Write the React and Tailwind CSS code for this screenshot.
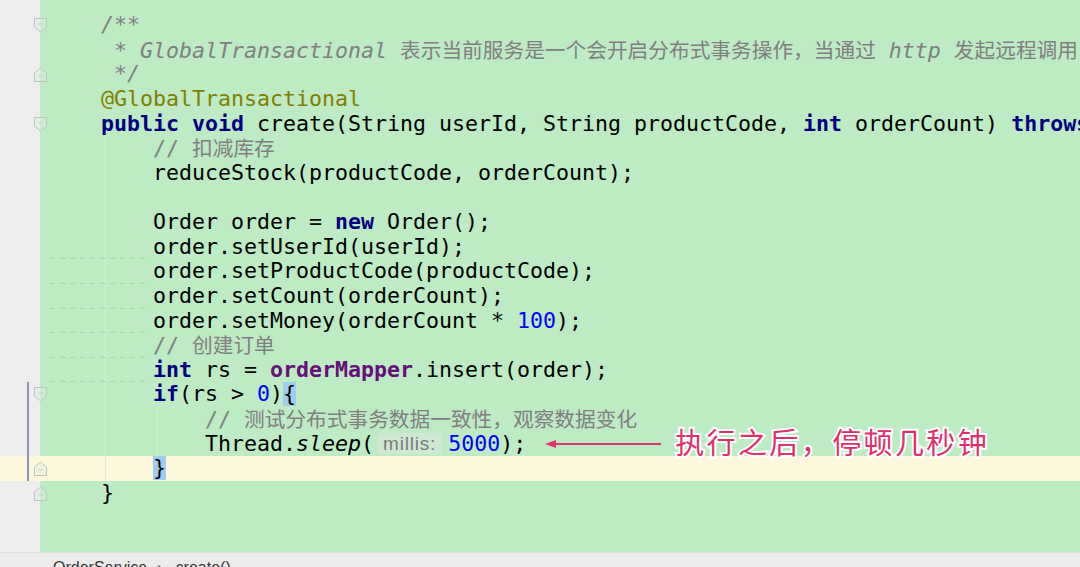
const mono = "font-['DejaVu_Sans_Mono','Liberation_Mono',monospace]";

const Kw = ({ children }) => <span className="text-[#000080] font-bold">{children}</span>;
const Cmt = ({ children }) => <span className="text-[#808080]">{children}</span>;
const Doc = ({ children }) => <span className="text-[#808080] italic">{children}</span>;
const Num = ({ children }) => <span className="text-[#0000ff]">{children}</span>;
const Cjk = ({ children }) => (
    <span className="font-['Noto_Sans_CJK_SC',sans-serif] text-[20.7px] not-italic">{children}</span>
);
const Brace = ({ children }) => <span className="bg-[#9fcdf0]">{children}</span>;

function Fold({ dir }) {
    const pts = dir === "down" ? "0.5,0.5 12.5,0.5 12.5,9 6.5,14 0.5,9" : "0.5,14.5 12.5,14.5 12.5,6 6.5,1 0.5,6";
    return (
        <svg className="absolute right-[-7px] top-[5px] z-10" width="13" height="15" viewBox="0 0 13 15">
            <polygon points={pts} fill="#e2eee3" fillOpacity="0.4" stroke="#b8cbbb" strokeWidth="1" />
            <line x1="4" y1={dir === "down" ? 6 : 9} x2="9" y2={dir === "down" ? 6 : 9} stroke="#c6d6c8" strokeWidth="1" />
        </svg>
    );
}

function Wavy() {
    return (
        <svg className="absolute left-[10px] bottom-[-2px]" width="100" height="4" viewBox="0 0 100 4">
            <path
                d="M0 2 Q2.5 0 5 2 T10 2 T15 2 T20 2 T25 2 T30 2 T35 2 T40 2 T45 2 T50 2 T55 2 T60 2 T65 2 T70 2 T75 2 T80 2 T85 2 T90 2 T95 2 T100 2"
                fill="none"
                stroke="#a9cfae"
                strokeWidth="1"
            />
        </svg>
    );
}

function Row({ children, fold, yellow, change, wavy, guides = [], top }) {
    return (
        <div className={`flex h-[24.63px] ${yellow ? "bg-[#fdf8dc]" : ""} ${top ? "relative z-20" : ""}`}>
            <div className={`relative w-[40px] shrink-0 ${yellow ? "" : "bg-[#ededed]"}`}>
                {change && <div className="absolute left-[27px] top-0 bottom-0 w-[2px] bg-[#8d96ae]" />}
                {fold && <Fold dir={fold} />}
            </div>
            <div
                className={`relative flex-1 flex items-center pl-[61px] whitespace-pre leading-[24.63px] ${
                    top ? "" : "overflow-hidden"
                } ${yellow ? "" : "bg-[#bdebc4]"}`}
            >
                {guides.includes(1) && <div className="absolute left-[65px] top-0 bottom-0 w-px bg-[#d3f0d7]" />}
                {guides.includes(2) && <div className="absolute left-[117px] top-0 bottom-0 w-px bg-[#d3f0d7]" />}
                {wavy && <Wavy />}
                <span className="relative">{children}</span>
            </div>
        </div>
    );
}

export default function App() {
    const I1 = "    ";
    const I2 = "        ";
    return (
        <div className={`w-[1080px] h-[567px] flex flex-col overflow-hidden bg-[#bdebc4] text-[21.6px] text-black ${mono}`}>
            <div className="flex h-[13px] shrink-0">
                <div className="w-[40px] bg-[#ededed]" />
                <div className="flex-1" />
            </div>

            <Row fold="down">
                <Doc>/**</Doc>
            </Row>
            <Row>
                <Doc>
                    {" * GlobalTransactional "}
                    <Cjk>表示当前服务是一个会开启分布式事务操作，当通过</Cjk>
                    {" http "}
                    <Cjk>发起远程调用</Cjk>
                </Doc>
            </Row>
            <Row fold="up">
                <Doc>{" */"}</Doc>
            </Row>
            <Row>
                <span className="text-[#808000]">@GlobalTransactional</span>
            </Row>
            <Row fold="down">
                <Kw>public</Kw> <Kw>void</Kw> create(String userId, String productCode, <Kw>int</Kw> orderCount){" "}
                <Kw>throws</Kw>
            </Row>
            <Row guides={[1]}>
                {I1}
                <Cmt>
                    {"// "}
                    <Cjk>扣减库存</Cjk>
                </Cmt>
            </Row>
            <Row guides={[1]}>{I1}reduceStock(productCode, orderCount);</Row>
            <Row guides={[1]}>{" "}</Row>
            <Row guides={[1]}>
                {I1}Order order = <Kw>new</Kw> Order();
            </Row>
            <Row guides={[1]} wavy>
                {I1}order.setUserId(userId);
            </Row>
            <Row guides={[1]} wavy>
                {I1}order.setProductCode(productCode);
            </Row>
            <Row guides={[1]} wavy>
                {I1}order.setCount(orderCount);
            </Row>
            <Row guides={[1]} wavy>
                {I1}order.setMoney(orderCount * <Num>100</Num>);
            </Row>
            <Row guides={[1]} wavy>
                {I1}
                <Cmt>
                    {"// "}
                    <Cjk>创建订单</Cjk>
                </Cmt>
            </Row>
            <Row guides={[1]} wavy>
                {I1}
                <Kw>int</Kw> rs = <span className="text-[#660e7a] font-bold">orderMapper</span>.insert(order);
            </Row>
            <Row guides={[1]} fold="down" change>
                {I1}
                <Kw>if</Kw>(rs &gt; <Num>0</Num>)<Brace>{"{"}</Brace>
            </Row>
            <Row guides={[1, 2]} change>
                {I2}
                <Cmt>
                    {"// "}
                    <Cjk>测试分布式事务数据一致性，观察数据变化</Cjk>
                </Cmt>
            </Row>
            <Row guides={[1, 2]} change top>
                <span className="inline-flex items-center ml-[104px]">
                    <span>
                        Thread.<span className="italic">sleep</span>(
                    </span>
                    <span className="inline-flex items-center h-[21px] ml-[3px] mr-[6px] px-[6px] rounded-[4px] bg-[#cfe8d1] text-[#7b7b7b] font-['Liberation_Sans',sans-serif] text-[19px] tracking-[0.8px] leading-none">
                        millis:
                    </span>
                    <span>
                        <Num>5000</Num>);
                    </span>
                    <svg className="ml-[19px]" width="116" height="12" viewBox="0 0 116 12">
                        <line x1="6" y1="6" x2="116" y2="6" stroke="#e0356c" strokeWidth="2" />
                        <polygon points="0,6 11,2 11,10" fill="#e0356c" />
                    </svg>
                    <span className="ml-[14px] -translate-y-[2px] font-['Noto_Sans_CJK_SC',sans-serif] text-[29px] tracking-[2.4px] leading-none text-[#e0306a] [-webkit-text-stroke:4px_#ffffff] [paint-order:stroke_fill]">
                        执行之后，停顿几秒钟
                    </span>
                </span>
            </Row>
            <Row fold="up" yellow change guides={[1]}>
                {I1}
                <Brace>{"}"}</Brace>
            </Row>
            <Row fold="up">{"}"}</Row>

            <div className="flex flex-1">
                <div className="w-[40px] bg-[#ededed]" />
                <div className="flex-1" />
            </div>
            <div className="h-[15px] shrink-0 flex bg-[#ebebeb] border-t border-[#dcdcdc] pl-[53px] pt-[6px] font-['Liberation_Sans',sans-serif] text-[16px] leading-[18px] text-[#3a3a3a]">
                <span>OrderService</span>
                <span className="ml-[10px]">›</span>
                <span className="ml-[13px]">create()</span>
            </div>
        </div>
    );
}
